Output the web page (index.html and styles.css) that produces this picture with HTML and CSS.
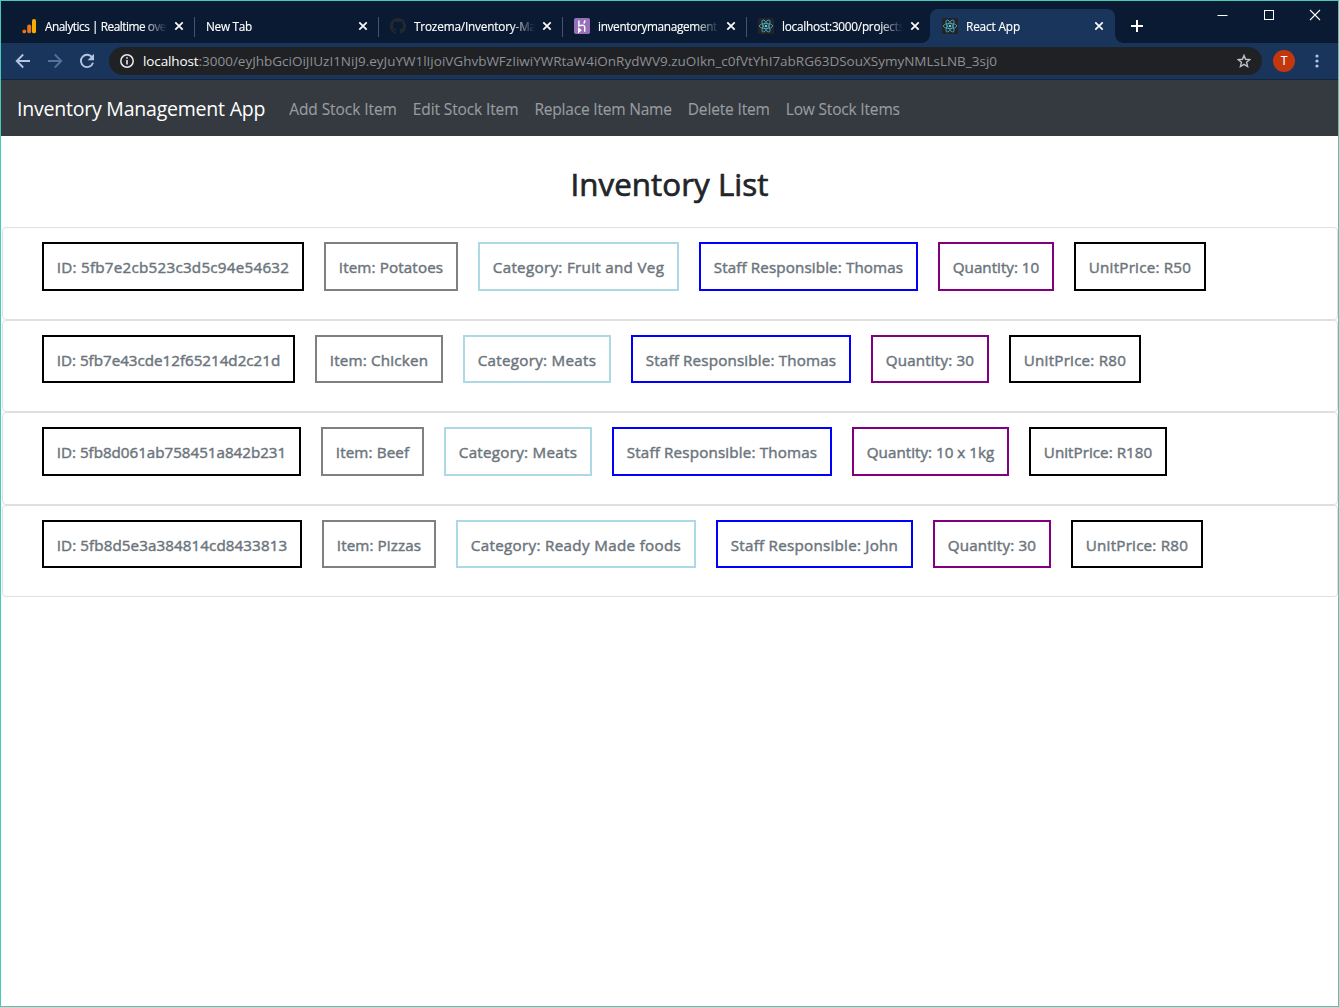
FILE: index.html
```html
<!DOCTYPE html>
<html lang="en">
<head>
<meta charset="utf-8">
<title>React App</title>
<link rel="stylesheet" href="styles.css">
</head>
<body>
<svg class="defs" width="0" height="0">
  <symbol id="close" viewBox="0 0 10 10"><path d="M1.3 1.3l7.4 7.4M8.7 1.3L1.3 8.7" stroke="#fff" stroke-width="1.7"/></symbol>
  <symbol id="react" viewBox="0 0 16 16">
    <rect width="16" height="16" rx="1.5" fill="#222426"/>
    <g fill="none" stroke="#4ba6bd" stroke-width=".85">
      <ellipse cx="8" cy="8" rx="6.7" ry="2.6"/>
      <ellipse cx="8" cy="8" rx="6.7" ry="2.6" transform="rotate(60 8 8)"/>
      <ellipse cx="8" cy="8" rx="6.7" ry="2.6" transform="rotate(120 8 8)"/>
    </g>
    <circle cx="8" cy="8" r="1.3" fill="#5fcbe5"/>
  </symbol>
</svg>
<div class="window">
  <header class="tabstrip">
    <div class="tab first">
      <svg class="favicon" viewBox="0 0 16 16"><circle cx="2.3" cy="13.4" r="1.9" fill="#e8751a"/><rect x="5.2" y="6.6" width="4" height="8.7" rx="1.8" fill="#e8751a"/><rect x="10" y="1" width="4" height="14.3" rx="1.9" fill="#f9ab00"/></svg>
      <span class="tab-title"><span data-fit="121">Analytics | Realtime ove</span></span>
      <svg class="close"><use href="#close"/></svg>
    </div>
    <div class="tab split">
      <span class="tab-title wide"><span data-fit="46">New Tab</span></span>
      <svg class="close"><use href="#close"/></svg>
    </div>
    <div class="tab split">
      <svg class="favicon" viewBox="0 0 16 16"><path fill="#24292e" d="M8 0C3.58 0 0 3.58 0 8c0 3.54 2.29 6.53 5.47 7.59.4.07.55-.17.55-.38 0-.19-.01-.82-.01-1.49-2.01.37-2.53-.49-2.69-.94-.09-.23-.48-.94-.82-1.13-.28-.15-.68-.52-.01-.53.63-.01 1.08.58 1.23.82.72 1.21 1.87.87 2.33.66.07-.52.28-.87.51-1.07-1.78-.2-3.64-.89-3.64-3.95 0-.87.31-1.59.82-2.15-.08-.2-.36-1.02.08-2.12 0 0 .67-.21 2.2.82.64-.18 1.32-.27 2-.27s1.36.09 2 .27c1.53-1.04 2.2-.82 2.2-.82.44 1.1.16 1.92.08 2.12.51.56.82 1.27.82 2.15 0 3.07-1.87 3.75-3.65 3.95.29.25.54.73.54 1.48 0 1.07-.01 1.93-.01 2.2 0 .21.15.46.55.38A8.01 8.01 0 0 0 16 8c0-4.42-3.58-8-8-8z"/></svg>
      <span class="tab-title"><span data-fit="122">Trozema/Inventory-Ma</span></span>
      <svg class="close"><use href="#close"/></svg>
    </div>
    <div class="tab split">
      <svg class="favicon" viewBox="0 0 16 16"><rect width="16" height="16" rx="1.8" fill="#9770b9"/><path d="M4.900 2.400v5.500c2.400-.9 5.800-1.300 5.800.9v4.900M11 2.400c-.1 1.300-.6 2.200-1.300 3M4.700 10.600l1.900 1.600-1.900 1.600z" fill="none" stroke="#fff" stroke-width="1.500"/></svg>
      <span class="tab-title"><span data-fit="119">inventorymanagement</span></span>
      <svg class="close"><use href="#close"/></svg>
    </div>
    <div class="tab split">
      <svg class="favicon"><use href="#react"/></svg>
      <span class="tab-title"><span data-fit="122">localhost:3000/projects</span></span>
      <svg class="close"><use href="#close"/></svg>
    </div>
    <div class="tab active">
      <svg class="favicon"><use href="#react"/></svg>
      <span class="tab-title"><span data-fit="54">React App</span></span>
      <svg class="close"><use href="#close"/></svg>
    </div>
    <svg class="new-tab" viewBox="0 0 12 12"><path d="M6 0v12M0 6h12" stroke="#fff" stroke-width="2"/></svg>
    <div class="controls">
      <svg viewBox="0 0 11 11"><path d="M.5 6.500h10" stroke="#fff"/></svg>
      <svg viewBox="0 0 11 11"><path d="M1 1.500h9v9H1z" fill="none" stroke="#fff" shape-rendering="crispEdges"/></svg>
      <svg viewBox="0 0 11 11"><path d="M1 1l10 10M11 1L1 11" stroke="#fff" stroke-width="1.1"/></svg>
    </div>
  </header>
  <div class="toolbar">
    <svg class="tool" viewBox="0 0 16 16"><path d="M15 8H2M8.200 1.500L1.700 8l6.500 6.500" fill="none" stroke="#b3c4e4" stroke-width="1.8"/></svg>
    <svg class="tool" viewBox="0 0 16 16"><path d="M1 8h13M7.800 1.500L14.300 8l-6.500 6.500" fill="none" stroke="#587099" stroke-width="1.8"/></svg>
    <svg class="tool" viewBox="0 0 16 16"><path d="M13.300 4.500A6.200 6.200 0 1 0 14 9.800" fill="none" stroke="#b3c4e4" stroke-width="1.9"/><path d="M15 .8v6.400H8.600z" fill="#b3c4e4"/></svg>
    <div class="omnibox">
      <svg class="info" viewBox="0 0 14 14"><circle cx="7" cy="7" r="6.200" fill="none" stroke="#e8eaed" stroke-width="1.500"/><path d="M7 3.200v1.600M7 6v4.600" stroke="#e8eaed" stroke-width="1.600"/></svg>
      <span class="url"><b data-fit="55.5">localhost</b><span data-fit="798.5">:3000/eyJhbGciOiJIUzI1NiJ9.eyJuYW1lIjoiVGhvbWFzIiwiYWRtaW4iOnRydWV9.zuOIkn_c0fVtYhI7abRG63DSouXSymyNMLsLNB_3sj0</span></span>
      <svg class="star" viewBox="0 0 14 14"><path d="M7 1.400l1.600 3.900 4.200.3-3.200 2.700 1 4.200L7 10.300l-3.600 2.200 1-4.200-3.200-2.700 4.200-.3z" fill="none" stroke="#bdc1c6" stroke-width="1.400"/></svg>
    </div>
    <span class="avatar">T</span>
    <svg class="more" viewBox="0 0 4 14"><g fill="#b3c4e4"><circle cx="2" cy="2" r="1.600"/><circle cx="2" cy="7" r="1.600"/><circle cx="2" cy="12" r="1.600"/></g></svg>
  </div>
  <nav class="navbar">
    <a class="brand" data-fit="248.200">Inventory Management App</a>
    <a class="link" data-fit="107.600">Add Stock Item</a>
    <a class="link" data-fit="105.600">Edit Stock Item</a>
    <a class="link" data-fit="137.400">Replace Item Name</a>
    <a class="link" data-fit="82">Delete Item</a>
    <a class="link" data-fit="114">Low Stock Items</a>
  </nav>
  <main>
    <h1><span data-fit="198">Inventory List</span></h1>
    <section class="card">
      <h6 class="id" data-fit="232.400">ID: 5fb7e2cb523c3d5c94e54632</h6>
      <h6 class="item" data-fit="104.400">Item: Potatoes</h6>
      <h6 class="category" data-fit="171.400">Category: Fruit and Veg</h6>
      <h6 class="staff" data-fit="189.400">Staff Responsible: Thomas</h6>
      <h6 class="quantity" data-fit="86.400">Quantity: 10</h6>
      <h6 class="price" data-fit="102.400">UnitPrice: R50</h6>
    </section>
    <section class="card">
      <h6 class="id" data-fit="223.400">ID: 5fb7e43cde12f65214d2c21d</h6>
      <h6 class="item" data-fit="98.400">Item: Chicken</h6>
      <h6 class="category" data-fit="118.400">Category: Meats</h6>
      <h6 class="staff" data-fit="190.400">Staff Responsible: Thomas</h6>
      <h6 class="quantity" data-fit="88.400">Quantity: 30</h6>
      <h6 class="price" data-fit="102.400">UnitPrice: R80</h6>
    </section>
    <section class="card">
      <h6 class="id" data-fit="229.400">ID: 5fb8d061ab758451a842b231</h6>
      <h6 class="item" data-fit="73.400">Item: Beef</h6>
      <h6 class="category" data-fit="118.400">Category: Meats</h6>
      <h6 class="staff" data-fit="190.400">Staff Responsible: Thomas</h6>
      <h6 class="quantity" data-fit="127.400">Quantity: 10 x 1kg</h6>
      <h6 class="price" data-fit="108.400">UnitPrice: R180</h6>
    </section>
    <section class="card">
      <h6 class="id" data-fit="230.400">ID: 5fb8d5e3a384814cd8433813</h6>
      <h6 class="item" data-fit="84.400">Item: Pizzas</h6>
      <h6 class="category" data-fit="210.400">Category: Ready Made foods</h6>
      <h6 class="staff" data-fit="167.400">Staff Responsible: John</h6>
      <h6 class="quantity" data-fit="88.400">Quantity: 30</h6>
      <h6 class="price" data-fit="102.400">UnitPrice: R80</h6>
    </section>
  </main>
</div>
<script src="fit.js"></script>
</body>
</html>
```
FILE: styles.css
```css
* { box-sizing: border-box; }
body { margin: 0; font-family: "Open Sans", "Noto Sans", sans-serif; background: #fff; }
.defs { position: absolute; }
svg { display: block; flex: none; }
[data-fit] { white-space: nowrap; flex: none; }

.window { height: 1007px; border: 1px solid #48cbb5; overflow: hidden; }

.tabstrip { display: flex; height: 42px; padding: 8px 0 0 9px; background: #0a1a33; }
.tab { position: relative; display: flex; align-items: center; width: 184px; height: 34px; padding: 0 10px 0 12px; flex: none; color: #fff; font-size: 11.8px; -webkit-text-stroke: .15px; }
.split::before { content: ""; position: absolute; left: 0; top: 8px; width: 1px; height: 20px; background: #47536a; }
.favicon { width: 16px; height: 16px; margin-right: 8px; }
.tab-title { width: 121px; margin-right: 7px; overflow: hidden; line-height: 18px; -webkit-mask-image: linear-gradient(90deg, #000 80%, transparent); mask-image: linear-gradient(90deg, #000 80%, transparent); }
.first .favicon { margin-right: 7px; }
.first .tab-title { width: 122px; }
.tab-title.wide { width: 145px; }
.tab-title > span { display: inline-block; }
.close { width: 10px; height: 10px; }
.active { width: 185px; background: #1a355b; border-radius: 8px 8px 0 0; }
.active::before, .active::after { content: ""; position: absolute; bottom: 0; width: 8px; height: 8px; }
.active::before { left: -8px; background: radial-gradient(circle at 0 0, transparent 7.5px, #1a355b 8px); }
.active::after { right: -8px; background: radial-gradient(circle at 100% 0, transparent 7.5px, #1a355b 8px); }
.new-tab { width: 12px; height: 12px; margin: 11px 0 0 16px; }
.controls { display: flex; gap: 35px; margin: 0 18px 0 auto; }
.controls svg { width: 11px; height: 11px; overflow: visible; }

.toolbar { display: flex; align-items: center; height: 37px; padding-left: 14px; background: #1a355b; border-bottom: 1px solid #13233c; }
.tool { width: 16px; height: 16px; margin-right: 16px; }
.omnibox { display: flex; align-items: center; width: 1153px; height: 28px; margin-left: -2px; padding: 0 11px; border-radius: 14px; background: #202124; }
.info { width: 14px; height: 14px; margin-right: 9px; }
.url { display: flex; flex: 1; color: #8d9094; font-size: 13.5px; line-height: 20px; }
.url b { color: #fff; font-weight: 400; }
.star { width: 14px; height: 14px; }
.avatar { width: 22px; height: 22px; margin-left: 11px; border-radius: 50%; background: #c2370d; color: #fff; font: 12px/22px Roboto, sans-serif; text-align: center; }
.more { width: 4px; height: 14px; margin-left: 19.500px; }

.navbar { display: flex; align-items: center; gap: 16px; height: 56px; padding: 0 16px; background: #343a40; }
.brand { margin-right: 8px; padding-top: 1px; color: #fff; font-size: 19.5px; line-height: 30px; }
.link { padding-top: 1px; color: #9a9da0; font-size: 15.5px; line-height: 24px; -webkit-text-stroke: .1px; }

main { padding-top: 24px; }
h1 { margin: 0 0 19px; color: #212529; font-size: 31.3px; font-weight: 400; line-height: 48px; text-align: center; -webkit-text-stroke: .7px; }
h1 span { display: inline-block; }
.card { display: flex; align-items: flex-start; gap: 20px; height: 92.5px; margin-left: 1px; padding: 14px 39px; border: 1px solid #dfdfdf; border-radius: 4px; }
.card h6 { margin: 0; padding: 14px 12.800px 11.600px; border: 2px solid #000; color: #6c757d; font-size: 15.200px; font-weight: 400; line-height: 19.200px; -webkit-text-stroke: .45px #6c757d; }
.card .item { border-color: gray; }
.card .category { border-color: lightblue; }
.card .staff { border-color: blue; }
.card .quantity { border-color: purple; }
```
FILE: fit.js
```js
// Track each label so that its text fills the width given in data-fit.
document.querySelectorAll("[data-fit]").forEach(function (el) {
  var target = parseFloat(el.dataset.fit);
  var range = document.createRange();
  range.selectNodeContents(el);
  var natural = range.getBoundingClientRect().width;
  el.style.letterSpacing = (target - natural) / el.textContent.length + "px";
});
```
